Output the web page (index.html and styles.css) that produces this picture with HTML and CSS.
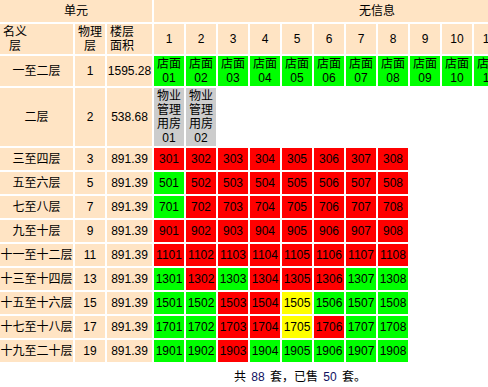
FILE: index.html
```html
<!DOCTYPE html>
<html lang="zh-CN">
<head>
<meta charset="utf-8">
<title>楼盘表</title>
<link rel="stylesheet" href="styles.css">
</head>
<body>
<div class="wrap">
<table class="grid">
  <tr>
    <td class="h" colspan="3">单元</td>
    <td class="h" colspan="14">无信息</td>
  </tr>
  <tr>
    <td class="h c1 left"><span>名义</span><br><span class="indent">层</span></td>
    <td class="h c2">物理层</td>
    <td class="h c3 left">楼层<br>面积</td>
    <td class="h u">1</td><td class="h u">2</td><td class="h u">3</td><td class="h u">4</td><td class="h u">5</td><td class="h u">6</td><td class="h u">7</td><td class="h u">8</td><td class="h u">9</td><td class="h u">10</td><td class="h u">11</td><td class="h u">12</td><td class="h u">13</td><td class="h u">14</td>
  </tr>
  <tr>
    <td class="h c1">一至二层</td><td class="h c2">1</td><td class="h c3">1595.28</td>
    <td class="u g">店面<br>01</td><td class="u g">店面<br>02</td><td class="u g">店面<br>03</td><td class="u g">店面<br>04</td><td class="u g">店面<br>05</td><td class="u g">店面<br>06</td><td class="u g">店面<br>07</td><td class="u g">店面<br>08</td><td class="u g">店面<br>09</td><td class="u g">店面<br>10</td><td class="u g">店面<br>11</td><td class="u g">店面<br>12</td><td class="u g">店面<br>13</td><td class="u g">店面<br>14</td>
  </tr>
  <tr>
    <td class="h c1">二层</td><td class="h c2">2</td><td class="h c3">538.68</td>
    <td class="u s">物业管理用房01</td><td class="u s">物业管理用房02</td>
  </tr>
  <tr>
    <td class="h c1">三至四层</td><td class="h c2">3</td><td class="h c3">891.39</td>
    <td class="u r">301</td><td class="u r">302</td><td class="u r">303</td><td class="u r">304</td><td class="u r">305</td><td class="u r">306</td><td class="u r">307</td><td class="u r">308</td>
  </tr>
  <tr>
    <td class="h c1">五至六层</td><td class="h c2">5</td><td class="h c3">891.39</td>
    <td class="u g">501</td><td class="u r">502</td><td class="u r">503</td><td class="u r">504</td><td class="u r">505</td><td class="u r">506</td><td class="u r">507</td><td class="u r">508</td>
  </tr>
  <tr>
    <td class="h c1">七至八层</td><td class="h c2">7</td><td class="h c3">891.39</td>
    <td class="u g">701</td><td class="u r">702</td><td class="u r">703</td><td class="u r">704</td><td class="u r">705</td><td class="u r">706</td><td class="u r">707</td><td class="u r">708</td>
  </tr>
  <tr>
    <td class="h c1">九至十层</td><td class="h c2">9</td><td class="h c3">891.39</td>
    <td class="u r">901</td><td class="u r">902</td><td class="u r">903</td><td class="u r">904</td><td class="u r">905</td><td class="u r">906</td><td class="u r">907</td><td class="u r">908</td>
  </tr>
  <tr>
    <td class="h c1">十一至十二层</td><td class="h c2">11</td><td class="h c3">891.39</td>
    <td class="u r">1101</td><td class="u r">1102</td><td class="u r">1103</td><td class="u r">1104</td><td class="u r">1105</td><td class="u r">1106</td><td class="u r">1107</td><td class="u r">1108</td>
  </tr>
  <tr>
    <td class="h c1">十三至十四层</td><td class="h c2">13</td><td class="h c3">891.39</td>
    <td class="u g">1301</td><td class="u r">1302</td><td class="u g">1303</td><td class="u r">1304</td><td class="u r">1305</td><td class="u r">1306</td><td class="u g">1307</td><td class="u g">1308</td>
  </tr>
  <tr>
    <td class="h c1">十五至十六层</td><td class="h c2">15</td><td class="h c3">891.39</td>
    <td class="u g">1501</td><td class="u g">1502</td><td class="u r">1503</td><td class="u r">1504</td><td class="u y">1505</td><td class="u g">1506</td><td class="u g">1507</td><td class="u g">1508</td>
  </tr>
  <tr>
    <td class="h c1">十七至十八层</td><td class="h c2">17</td><td class="h c3">891.39</td>
    <td class="u g">1701</td><td class="u g">1702</td><td class="u r">1703</td><td class="u r">1704</td><td class="u y">1705</td><td class="u r">1706</td><td class="u g">1707</td><td class="u g">1708</td>
  </tr>
  <tr>
    <td class="h c1">十九至二十层</td><td class="h c2">19</td><td class="h c3">891.39</td>
    <td class="u g">1901</td><td class="u g">1902</td><td class="u r">1903</td><td class="u g">1904</td><td class="u g">1905</td><td class="u g">1906</td><td class="u g">1907</td><td class="u g">1908</td>
  </tr>
</table>
<div class="total">共 <span class="num">88</span> 套，已售 <span class="num">50</span> 套。</div>
</div>
</body>
</html>
```

FILE: styles.css
```css
html, body {
  margin: 0;
  padding: 0;
  overflow: hidden;
  background: #ffffff;
}

body {
  font-family: "Liberation Sans", "Noto Sans CJK SC", sans-serif;
  font-size: 12px;
  line-height: 14px;
  color: #000000;
}

.wrap {
  width: max-content;
  margin: -2px 0 0 -2px;
}

.grid {
  border-collapse: separate;
  border-spacing: 2px;
}

.grid td {
  height: 20px;
  padding: 1px 0;
  text-align: center;
  vertical-align: middle;
  white-space: normal;
}

.h { background: #ffe4c4; }
.g { background: #00ff00; }
.r { background: #ff0000; }
.y { background: #ffff00; }
.s { background: #cccccc; }

.grid .c1 { width: 73px; white-space: nowrap; }
.grid .c2 { width: 30px; }
.grid .c3 { width: 45px; white-space: nowrap; }
.grid .u { width: 30px; }

.grid .left { text-align: left; padding-left: 3px; }
.grid .c1.left { width: 70px; }
.grid .c3.left { width: 42px; }
.indent { padding-left: 6px; }

.total {
  margin-top: 6px;
  text-align: center;
  line-height: 14px;
  word-spacing: 2px;
}

.num { color: #101060; }
```
